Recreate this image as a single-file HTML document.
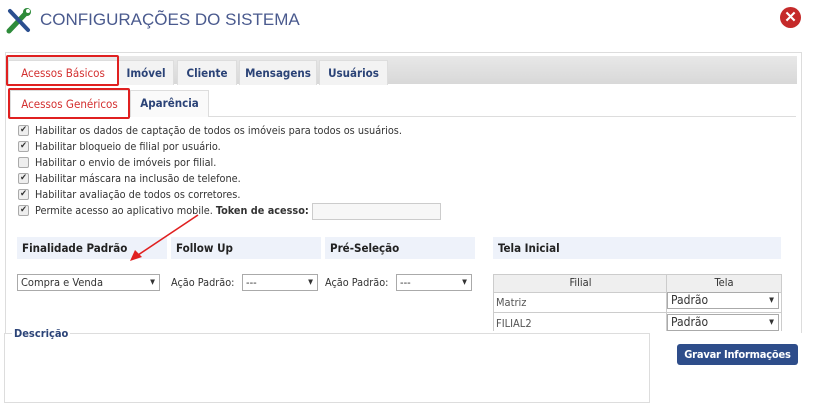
<!DOCTYPE html><html><head><meta charset="utf-8"><style>
body{margin:0;width:816px;height:416px;background:#fff;font-family:"DejaVu Sans Condensed","DejaVu Sans","Liberation Sans",sans-serif;position:relative;overflow:hidden}
div{white-space:nowrap}
.a{position:absolute}
.tab{position:absolute;top:60px;height:24px;background:#f3f3f3;border:1px solid #ddd;border-bottom:none;font-size:11.5px;color:#2b4377;text-align:center;line-height:24px;font-weight:bold}
.cb{position:absolute;left:18px;width:9px;height:9px;border:1px solid #aaa;background:#eee;border-radius:2px;font-size:9px;line-height:9px;text-align:center;color:#333}
.lt{position:absolute;left:35px;font-size:10.8px;color:#333}
.hd{position:absolute;top:237px;height:22px;background:#eef2fa;font-size:11.5px;font-weight:bold;color:#222;line-height:22px;padding-left:5px;box-sizing:border-box}
.sel{position:absolute;height:15px;border:1px solid #aaa;background:#fff;font-size:11px;line-height:15px;padding-left:3px;box-sizing:content-box;color:#333}
.sel:after{content:"▼";position:absolute;right:4px;font-size:7px;top:0}
</style></head><body>
<svg class="a" style="left:6px;top:8px" width="26" height="26" viewBox="0 0 26 26"><path d="M3 23 L20 5" stroke="#2e8b3a" stroke-width="5" stroke-linecap="round"/><circle cx="21" cy="4" r="4" fill="#2e8b3a"/><circle cx="22" cy="3" r="2" fill="#fff"/><path d="M4 3 L22 22" stroke="#2b4f8f" stroke-width="4" stroke-linecap="round"/><path d="M2 2 L7 3 L5 6Z" fill="#2b4f8f"/></svg>
<div class="a" style="left:40px;top:10px;font-size:17px;color:#4a5a8e;font-family:'Liberation Sans',sans-serif">CONFIGURAÇÕES DO SISTEMA</div>
<div class="a" style="left:780px;top:7px;width:21px;height:21px;border-radius:50%;background:#c52a2a;color:#fff;text-align:center;line-height:21px;font-size:15px;font-weight:bold;font-family:'Liberation Sans'">✕</div>
<div class="a" style="left:5px;top:52px;width:795px;height:280px;border:1px solid #ddd;border-bottom:none"></div>
<div class="a" style="left:7px;top:56px;width:790px;height:28px;background:linear-gradient(#e8e8e8,#d8d8d8)"></div>
<div class="tab" style="left:8px;width:108px;background:#fff;color:#d32f2f;height:25px;font-weight:normal">Acessos Básicos</div>
<div class="tab" style="left:118px;width:54px">Imóvel</div>
<div class="tab" style="left:177px;width:58px">Cliente</div>
<div class="tab" style="left:239px;width:76px">Mensagens</div>
<div class="tab" style="left:319px;width:67px">Usuários</div>
<div class="a" style="left:6px;top:55px;width:109px;height:27px;border:2px solid #e02020;border-radius:2px"></div>
<div class="a" style="left:8px;top:116px;width:788px;border-top:1px solid #ddd"></div>
<div class="tab" style="left:10px;top:90px;width:117px;height:27px;background:#fff;color:#d32f2f;line-height:26px;font-weight:normal">Acessos Genéricos</div>
<div class="tab" style="left:130px;top:90px;width:77px;height:26px;background:#fafafa">Aparência</div>
<div class="a" style="left:8px;top:88px;width:118px;height:27px;border:2px solid #e02020;border-radius:2px"></div>
<div class="cb" style="top:125px">✔</div><div class="lt" style="top:124px">Habilitar os dados de captação de todos os imóveis para todos os usuários.</div>
<div class="cb" style="top:141px">✔</div><div class="lt" style="top:140px">Habilitar bloqueio de filial por usuário.</div>
<div class="cb" style="top:157px"></div><div class="lt" style="top:156px">Habilitar o envio de imóveis por filial.</div>
<div class="cb" style="top:173px">✔</div><div class="lt" style="top:172px">Habilitar máscara na inclusão de telefone.</div>
<div class="cb" style="top:189px">✔</div><div class="lt" style="top:188px">Habilitar avaliação de todos os corretores.</div>
<div class="cb" style="top:205px">✔</div><div class="lt" style="top:204px">Permite acesso ao aplicativo mobile. <b>Token de acesso:</b></div>
<div class="a" style="left:312px;top:203px;width:127px;height:15px;border:1px solid #ccc;background:#f7f7f7"></div>
<div class="hd" style="left:17px;width:150px">Finalidade Padrão</div>
<div class="hd" style="left:171px;width:150px">Follow Up</div>
<div class="hd" style="left:325px;width:150px">Pré-Seleção</div>
<div class="hd" style="left:493px;width:288px">Tela Inicial</div>
<div class="sel" style="left:17px;top:274px;width:138px">Compra e Venda</div>
<div class="lt" style="left:171px;top:276px">Ação Padrão:</div>
<div class="sel" style="left:242px;top:274px;width:71px">---</div>
<div class="lt" style="left:325px;top:276px">Ação Padrão:</div>
<div class="sel" style="left:396px;top:274px;width:71px">---</div>
<div class="a" style="left:493px;top:274px;width:287px;height:56px;border:1px solid #ccc;border-bottom:none;overflow:hidden;font-size:11px;color:#333">
<div class="a" style="left:0;top:0;width:287px;height:17px;background:#efefef;border-bottom:1px solid #ccc"></div>
<div class="a" style="left:0;top:1px;width:173px;text-align:center">Filial</div>
<div class="a" style="left:173px;top:1px;width:114px;text-align:center">Tela</div>
<div class="a" style="left:172px;top:0;height:60px;border-left:1px solid #ccc"></div>
<div class="a" style="left:0;top:37px;width:287px;border-top:1px solid #ccc"></div>
<div class="a" style="left:2px;top:21px;color:#555">Matriz</div>
<div class="a" style="left:2px;top:42px;color:#555">FILIAL2</div>
</div>
<div class="sel" style="left:667px;top:292px;width:107px;font-size:12px">Padrão</div>
<div class="sel" style="left:667px;top:314px;width:107px;font-size:12px">Padrão</div>
<div class="a" style="left:4px;top:333px;width:644px;height:68px;border:1px solid #ddd"></div>
<div class="a" style="left:12px;top:327px;background:#fff;padding:0 2px;font-size:11px;font-weight:bold;color:#2b4377">Descrição</div>
<div class="a" style="left:677px;top:344px;width:121px;height:21px;background:#2e4d8a;border-radius:3px;color:#fff;font-size:11px;font-weight:bold;text-align:center;line-height:21px;letter-spacing:-0.2px">Gravar Informações</div>
<svg class="a" style="left:0;top:0" width="816" height="416"><line x1="198" y1="215" x2="138" y2="255" stroke="#e02020" stroke-width="1.6"/><path d="M130 261 L135 250 L142 257Z" fill="#e02020"/></svg>
</body></html>
